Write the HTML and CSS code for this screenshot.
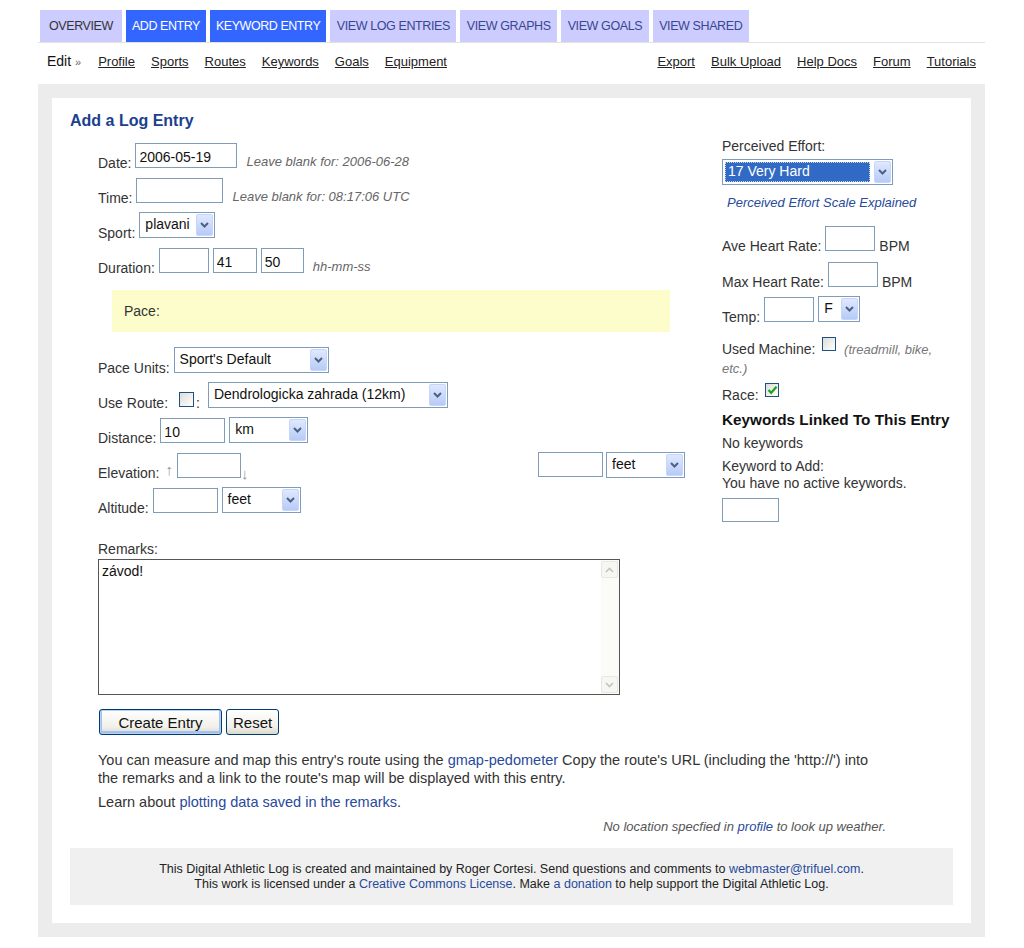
FILE: index.html
```html
<!DOCTYPE html>
<html lang="en">
<head>
<meta charset="utf-8">
<title>Add a Log Entry</title>
<link rel="stylesheet" href="styles.css">
</head>
<body>
<div class="page">
  <nav class="tabs">
    <a class="tab tab-dark">OVERVIEW</a>
    <a class="tab tab-on">ADD ENTRY</a>
    <a class="tab tab-on">KEYWORD ENTRY</a>
    <a class="tab">VIEW LOG ENTRIES</a>
    <a class="tab">VIEW GRAPHS</a>
    <a class="tab">VIEW GOALS</a>
    <a class="tab">VIEW SHARED</a>
  </nav>
  <div class="subnav">
    <div class="sub-group">
      <span class="edit">Edit <span class="raquo">»</span></span>
      <a class="sublink">Profile</a>
      <a class="sublink">Sports</a>
      <a class="sublink">Routes</a>
      <a class="sublink">Keywords</a>
      <a class="sublink">Goals</a>
      <a class="sublink">Equipment</a>
    </div>
    <div class="sub-group">
      <a class="sublink">Export</a>
      <a class="sublink">Bulk Upload</a>
      <a class="sublink">Help Docs</a>
      <a class="sublink">Forum</a>
      <a class="sublink">Tutorials</a>
    </div>
  </div>

  <div class="frame">
    <div class="sheet">
      <h1 class="title">Add a Log Entry</h1>
      <div class="main">
        <div class="left">
          <div class="row">
            <span class="lbl">Date:</span>
            <input class="inp in-date" type="text" value="2006-05-19">
            <span class="hint">Leave blank for: 2006-06-28</span>
          </div>
          <div class="row">
            <span class="lbl">Time:</span>
            <input class="inp in-time" type="text" value="">
            <span class="hint">Leave blank for: 08:17:06 UTC</span>
          </div>
          <div class="row">
            <span class="lbl">Sport:</span>
            <span class="sel sel-sport"><span class="sel-v">plavani</span><span class="sel-b"><svg width="9" height="6" viewBox="0 0 9 6"><polyline points="1,1 4.5,4.5 8,1" fill="none" stroke="#4d6185" stroke-width="2"/></svg></span></span>
          </div>
          <div class="row">
            <span class="lbl">Duration:</span>
            <input class="inp in-hh" type="text" value="">
            <input class="inp in-mm" type="text" value="41">
            <input class="inp in-ss" type="text" value="50">
            <span class="hint">hh-mm-ss</span>
          </div>
          <div class="pace">Pace:</div>
          <div class="row">
            <span class="lbl">Pace Units:</span>
            <span class="sel sel-units"><span class="sel-v">Sport's Default</span><span class="sel-b"><svg width="9" height="6" viewBox="0 0 9 6"><polyline points="1,1 4.5,4.5 8,1" fill="none" stroke="#4d6185" stroke-width="2"/></svg></span></span>
          </div>
          <div class="row">
            <span class="lbl">Use Route:</span>
            <span class="chk chk-route"></span><span class="colon">:</span>
            <span class="sel sel-route"><span class="sel-v">Dendrologicka zahrada (12km)</span><span class="sel-b"><svg width="9" height="6" viewBox="0 0 9 6"><polyline points="1,1 4.5,4.5 8,1" fill="none" stroke="#4d6185" stroke-width="2"/></svg></span></span>
          </div>
          <div class="row">
            <span class="lbl">Distance:</span>
            <input class="inp in-dist" type="text" value="10">
            <span class="sel sel-unit"><span class="sel-v">km</span><span class="sel-b"><svg width="9" height="6" viewBox="0 0 9 6"><polyline points="1,1 4.5,4.5 8,1" fill="none" stroke="#4d6185" stroke-width="2"/></svg></span></span>
          </div>
          <div class="row">
            <span class="lbl">Elevation:</span>
            <span class="arrow">↑</span><input class="inp in-elev" type="text" value=""><span class="arrow arrow-down">↓</span>
            <span class="elev-right">
              <input class="inp in-dist" type="text" value="">
              <span class="sel sel-unit"><span class="sel-v">feet</span><span class="sel-b"><svg width="9" height="6" viewBox="0 0 9 6"><polyline points="1,1 4.5,4.5 8,1" fill="none" stroke="#4d6185" stroke-width="2"/></svg></span></span>
            </span>
          </div>
          <div class="row">
            <span class="lbl">Altitude:</span>
            <input class="inp in-dist" type="text" value="">
            <span class="sel sel-unit"><span class="sel-v">feet</span><span class="sel-b"><svg width="9" height="6" viewBox="0 0 9 6"><polyline points="1,1 4.5,4.5 8,1" fill="none" stroke="#4d6185" stroke-width="2"/></svg></span></span>
          </div>

          <div class="remarks-lbl">Remarks:</div>
          <div class="textarea">
            <div class="ta-text">závod!</div>
            <div class="ta-scroll">
              <span class="ta-btn"><svg width="9" height="6" viewBox="0 0 9 6"><polyline points="1,5 4.5,1.5 8,5" fill="none" stroke="#c3c3bb" stroke-width="1.6"/></svg></span>
              <span class="ta-track"></span>
              <span class="ta-btn"><svg width="9" height="6" viewBox="0 0 9 6"><polyline points="1,1 4.5,4.5 8,1" fill="none" stroke="#c3c3bb" stroke-width="1.6"/></svg></span>
            </div>
          </div>
          <div class="buttons">
            <button class="btn btn-default" type="button">Create Entry</button>
            <button class="btn" type="button">Reset</button>
          </div>
        </div>

        <div class="right">
          <div class="r-line">Perceived Effort:</div>
          <span class="sel sel-effort"><span class="sel-v"><span class="sel-hl">17 Very Hard</span></span><span class="sel-b"><svg width="9" height="6" viewBox="0 0 9 6"><polyline points="1,1 4.5,4.5 8,1" fill="none" stroke="#4d6185" stroke-width="2"/></svg></span></span>
          <div class="scale-link"><a class="link">Perceived Effort Scale Explained</a></div>
          <div class="row r-row r-ave">
            <span class="lbl">Ave Heart Rate:</span>
            <input class="inp in-hr" type="text" value="">
            <span class="lbl">BPM</span>
          </div>
          <div class="row r-row r-max">
            <span class="lbl">Max Heart Rate:</span>
            <input class="inp in-hr" type="text" value="">
            <span class="lbl">BPM</span>
          </div>
          <div class="row r-row r-temp">
            <span class="lbl">Temp:</span>
            <input class="inp in-hr" type="text" value="">
            <span class="sel sel-f"><span class="sel-v">F</span><span class="sel-b"><svg width="9" height="6" viewBox="0 0 9 6"><polyline points="1,1 4.5,4.5 8,1" fill="none" stroke="#4d6185" stroke-width="2"/></svg></span></span>
          </div>
          <div class="machine">Used Machine: <span class="chk chk-inline"></span> &nbsp;<span class="hint-inline">(treadmill, bike, etc.)</span></div>
          <div class="race">Race: <span class="chk chk-inline chk-on"><svg width="11" height="10" viewBox="0 0 11 10"><polyline points="1.5,5 4.2,7.8 9.5,1.8" fill="none" stroke="#21a121" stroke-width="2.2"/></svg></span></div>
          <h2 class="kw-head">Keywords Linked To This Entry</h2>
          <div class="r-line kw-none">No keywords</div>
          <div class="kw-add">Keyword to Add:<br>You have no active keywords.</div>
          <input class="inp in-kw" type="text" value="">
        </div>
      </div>

      <div class="notes">
        <p class="note">You can measure and map this entry's route using the <a class="link">gmap-pedometer</a> Copy the route's URL (including the 'http://') into the remarks and a link to the route's map will be displayed with this entry.</p>
        <p class="note note-2">Learn about <a class="link">plotting data saved in the remarks</a>.</p>
        <p class="weather">No location specfied in <a class="link">profile</a> to look up weather.</p>
      </div>

      <footer class="foot">
        <div>This Digital Athletic Log is created and maintained by Roger Cortesi. Send questions and comments to <a class="link">webmaster@trifuel.com</a>.</div>
        <div>This work is licensed under a <a class="link">Creative Commons License</a>. Make <a class="link">a donation</a> to help support the Digital Athletic Log.</div>
      </footer>
    </div>
  </div>
</div>
</body>
</html>
```

FILE: styles.css
```css
* { box-sizing: border-box; }

body {
  margin: 0;
  background: #fff;
  font-family: "Liberation Sans", Arial, sans-serif;
  color: #333;
}

.page {
  margin-left: 38px;
  width: 947px;
  padding-top: 10px;
}

/* Tabs */
.tabs {
  display: flex;
  gap: 4px;
  padding-left: 2px;
  border-bottom: 1px solid #e2e2e2;
}

.tab {
  display: block;
  height: 32px;
  line-height: 32px;
  padding: 0 6.5px;
  font-size: 12.5px;
  background: #ccccff;
  color: #3a4690;
  text-decoration: none;
  letter-spacing: -0.4px;
}

.tab-dark { color: #333; padding: 0 9px; }

.tab-on {
  background: #3366ff;
  color: #fff;
  padding: 0 6px;
  letter-spacing: -0.45px;
}

/* Sub navigation */
.subnav {
  display: flex;
  justify-content: space-between;
  padding: 10px 9px 0 9px;
  height: 41px;
}

.sub-group {
  display: flex;
  gap: 16px;
  align-items: baseline;
  line-height: 17px;
}

.edit {
  font-size: 14px;
  color: #111;
  margin-right: 1px;
}

.raquo {
  font-size: 11px;
  color: #666;
}

.sublink {
  font-size: 13px;
  color: #222;
  text-decoration: underline;
}

/* Frame */
.frame {
  background: #ececec;
  padding: 14px;
}

.sheet {
  background: #fff;
  padding: 13px 18px 18px 18px;
}

.title {
  margin: 0;
  font-size: 16px;
  line-height: 20px;
  font-weight: bold;
  color: #1b3f8f;
}

.main {
  display: flex;
  margin-top: 11px;
}

.left {
  margin-left: 28px;
  width: 592px;
  flex-shrink: 0;
}

.right {
  margin-left: 32px;
  width: 231px;
  flex-shrink: 0;
  margin-top: -5px;
  font-size: 14px;
}

/* Rows */
.row {
  display: flex;
  align-items: flex-end;
  gap: 4px;
  height: 26px;
  margin-bottom: 9px;
}

.lbl {
  font-size: 14px;
  line-height: 14px;
  color: #333;
  white-space: nowrap;
  margin-bottom: -2px;
}

.hint {
  font-size: 13px;
  font-style: italic;
  color: #666;
  line-height: 14px;
  margin-left: 5px;
  margin-bottom: -1px;
}

.inp {
  height: 25px;
  border: 1px solid #7f9db9;
  background: #fff;
  font-family: "Liberation Sans", Arial, sans-serif;
  font-size: 14px;
  color: #111;
  padding: 2px 3px 0 3px;
  margin: 0;
  outline: none;
}

.in-date { width: 102px; }
.in-time { width: 87px; }
.in-hh { width: 50px; }
.in-mm { width: 44px; }
.in-ss { width: 43px; }
.in-dist { width: 65px; }
.in-elev { width: 64px; }
.in-hr { width: 50px; }
.in-kw { width: 57px; height: 24px; margin-top: 6px; display: block; }

/* Select look */
.sel {
  display: inline-flex;
  align-items: center;
  height: 26px;
  border: 1px solid #7f9db9;
  background: #fff;
  font-size: 14px;
  color: #111;
}

.sel-v {
  flex: 1;
  padding-left: 5px;
  padding-bottom: 2px;
  white-space: nowrap;
  overflow: hidden;
}

.sel-b {
  width: 17px;
  height: 22px;
  margin-right: 1px;
  border: 1px solid #c6d5fb;
  border-radius: 2px;
  background: linear-gradient(#dfe8fe, #b7cbf7);
  display: flex;
  align-items: center;
  justify-content: center;
}

.sel-sport { width: 76px; }
.sel-units { width: 155px; }
.sel-route { width: 240px; margin-left: 4px; }
.sel-unit { width: 79px; }
.sel-f { width: 42px; }

.sel-effort {
  width: 171px;
  margin-top: 4px;
}

.sel-effort .sel-v { padding-left: 2px; padding-right: 4px; padding-bottom: 0; }

.sel-hl {
  display: block;
  background: #316ac5;
  color: #fff;
  outline: 1px dotted #c5d3ee;
  outline-offset: -1px;
  padding: 1px 3px 2px 3px;
  line-height: 17px;
}

/* Checkboxes */
.chk {
  display: inline-block;
  width: 15px;
  height: 15px;
  border: 1px solid #1c5180;
  background: linear-gradient(135deg, #dcdcd7, #fff);
}

.chk-route { margin-bottom: 1px; margin-left: 7px; }

.colon {
  font-size: 14px;
  line-height: 14px;
  margin-left: -2px;
  margin-bottom: -2px;
}

.chk-inline {
  width: 14px;
  height: 14px;
  vertical-align: 3px;
  margin-left: 3px;
}

.chk-on svg {
  display: block;
  margin: 1px 0 0 1px;
}

.arrow {
  font-size: 15px;
  color: #999;
  line-height: 14px;
  margin-bottom: 1px;
  margin-left: 2px;
}

.arrow-down { margin-left: -4px; margin-bottom: -3px; }

.elev-right {
  margin-left: auto;
  margin-right: 5px;
  display: flex;
  gap: 3px;
}

/* Pace box */
.pace {
  margin: 17px 0 15px 14px;
  width: 558px;
  height: 42px;
  background: #fdfdcc;
  padding-left: 12px;
  line-height: 42px;
  font-size: 14px;
  color: #333;
}

/* Remarks */
.remarks-lbl {
  margin-top: 27px;
  font-size: 14px;
  line-height: 18px;
}

.textarea {
  margin-top: 1px;
  width: 522px;
  height: 136px;
  border: 1px solid #555;
  display: flex;
  background: #fff;
}

.ta-text {
  flex: 1;
  padding: 3px 3px;
  font-family: "Liberation Sans", Arial, sans-serif;
  font-size: 14px;
  color: #111;
}

.ta-scroll {
  width: 18px;
  display: flex;
  flex-direction: column;
  background: #fbfbf8;
  padding: 1px 1px 1px 0;
}

.ta-btn {
  height: 17px;
  border: 1px solid #e8e8e2;
  border-radius: 2px;
  background: #f6f6f2;
  display: flex;
  align-items: center;
  justify-content: center;
}

.ta-track { flex: 1; }

.buttons {
  margin-top: 14px;
  display: flex;
  gap: 4px;
  margin-left: 1px;
}

.btn {
  height: 26px;
  border: 1px solid #003c74;
  border-radius: 3px;
  background: linear-gradient(#ffffff, #f1f0ea 70%, #dcd8cc);
  font-family: "Liberation Sans", Arial, sans-serif;
  font-size: 15px;
  color: #111;
  padding: 0 6px;
  margin: 0;
}

.btn-default {
  width: 123px;
  box-shadow: inset 0 0 0 1px #b8cff5, inset 0 -1px 0 2px #a4c0ee;
}

/* Right column */
.r-line {
  line-height: 18px;
}

.scale-link {
  margin-top: 9px;
  padding-left: 5px;
  line-height: 16px;
}

.scale-link .link {
  font-size: 13px;
  font-style: italic;
}

.r-row { height: 25px; margin-bottom: 0; }
.r-ave { margin-top: 15px; }
.r-max { margin-top: 11px; }
.r-temp { margin-top: 9px; height: 26px; }

.machine {
  margin-top: 15px;
  line-height: 18px;
}

.hint-inline {
  font-size: 13px;
  font-style: italic;
  color: #777;
}

.race {
  margin-top: 5px;
  line-height: 18px;
}

.kw-head {
  margin: 6px 0 0 0;
  font-size: 15.3px;
  line-height: 20px;
  font-weight: bold;
  color: #111;
  white-space: nowrap;
}

.kw-none { margin-top: 4px; }

.kw-add {
  margin-top: 6px;
  line-height: 17px;
}

/* Notes */
.notes {
  margin-left: 28px;
  width: 788px;
  margin-top: 16px;
}

.note {
  margin: 0;
  font-size: 14.5px;
  line-height: 18px;
  color: #333;
}

.note-2 { margin-top: 6px; }

.weather {
  margin: 7px 0 0 0;
  text-align: right;
  font-size: 13px;
  font-style: italic;
  line-height: 18px;
  color: #555;
}

.link {
  color: #284a9c;
  text-decoration: none;
}

/* Footer */
.foot {
  margin-top: 12px;
  height: 57px;
  background: #f0f0f0;
  padding-top: 14px;
  text-align: center;
  font-size: 12.5px;
  line-height: 15px;
  color: #222;
}
```
